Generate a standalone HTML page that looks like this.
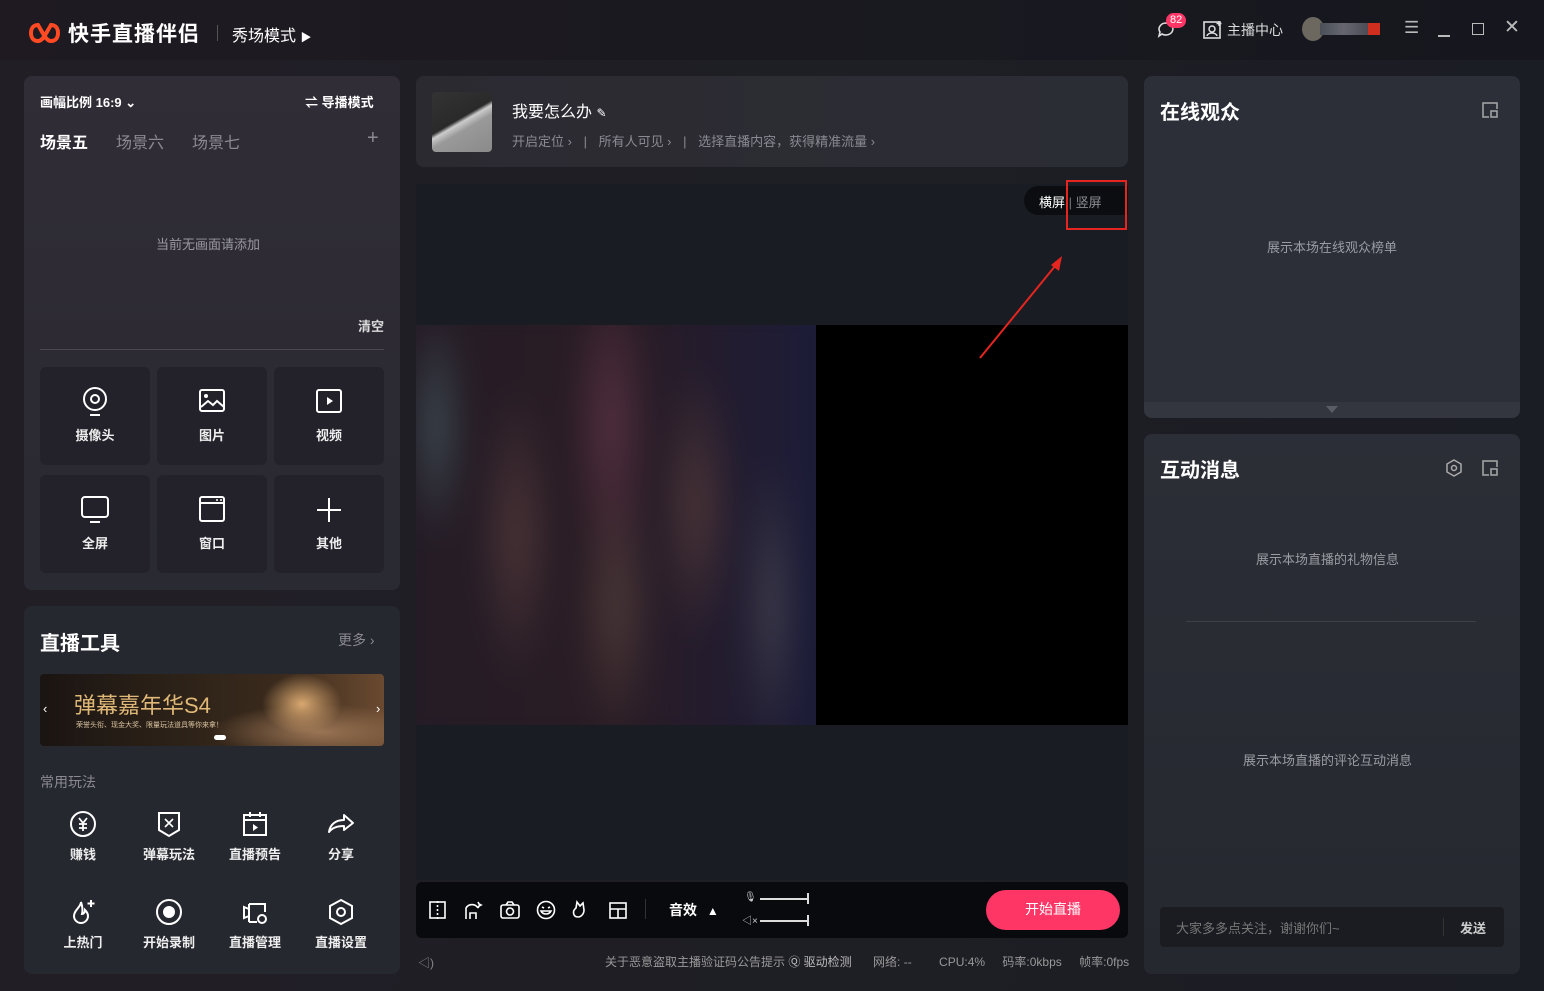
<!DOCTYPE html>
<html><head><meta charset="utf-8"><style>
*{margin:0;padding:0;box-sizing:border-box}
body{width:1544px;height:991px;overflow:hidden;font-family:"Liberation Sans","Noto Sans CJK SC",sans-serif;color:#fff;background:linear-gradient(90deg,#221e26 0%,#1f1e25 40%,#1b1d24 100%);position:relative;font-size:13px}
.abs{position:absolute}
.top{left:0;top:0;width:1544px;height:60px;background:linear-gradient(90deg,#1f1a21,#191920 60%,#16171e)}
.panel{position:absolute;border-radius:8px}
.tile{position:absolute;width:110px;height:98px;background:#232129;border-radius:6px;text-align:center;font-size:13px;color:#eee;font-weight:bold}
.tile svg{display:block;margin:20px auto 8px}
.tool{position:absolute;width:86px;text-align:center;font-size:13px;color:#eee;font-weight:bold}
.tool svg{display:block;margin:0 auto 6px}
.g{color:#8b8a92}
</style></head><body>
<div class="abs top"></div>
<svg class="abs" style="left:29px;top:22px" width="31" height="22" viewBox="0 0 31 22"><path d="M9 3C4 3 2 7 2 11s2 8 7 8c5 0 8-8 13-16 5 0 7 4 7 8s-2 8-7 8c-5 0-8-8-13-16z" fill="none" stroke="#ff4a24" stroke-width="4"/></svg>
<div class="abs" style="left:68px;top:18px;font-size:21px;font-weight:bold;letter-spacing:1px">快手直播伴侣</div>
<div class="abs" style="left:217px;top:25px;width:1px;height:16px;background:#555"></div>
<div class="abs" style="left:232px;top:22px;font-size:16px">秀场模式 <span style="font-size:11px">▶</span></div>
<svg class="abs" style="left:1156px;top:20px" width="20" height="20" viewBox="0 0 20 20"><path d="M10 3a7 6 0 1 1-4 11l-3 2 1-4A7 6 0 0 1 10 3z" fill="none" stroke="#ddd" stroke-width="1.6"/></svg>
<div class="abs" style="left:1166px;top:13px;background:#fe3666;border-radius:8px;font-size:11px;padding:0 4px;height:15px;line-height:15px">82</div>
<svg class="abs" style="left:1203px;top:20px" width="20" height="20" viewBox="0 0 20 20"><rect x="1" y="2" width="16" height="16" fill="none" stroke="#ddd" stroke-width="1.6"/><circle cx="9" cy="9" r="3" fill="none" stroke="#ddd" stroke-width="1.5"/><path d="M4 16c1-4 9-4 10 0M16 1v5M13.5 3.5h5" stroke="#ddd" stroke-width="1.5" fill="none"/></svg>
<div class="abs" style="left:1227px;top:20px;font-size:14px;color:#ddd">主播中心</div>
<div class="abs" style="left:1302px;top:17px;width:22px;height:24px;border-radius:50%;background:#6c6860"></div>
<div class="abs" style="left:1320px;top:23px;width:48px;height:12px;background:linear-gradient(90deg,#4a5058,#666670,#4b4c55)"></div>
<div class="abs" style="left:1368px;top:23px;width:12px;height:12px;background:#d02e1e"></div>
<div class="abs" style="left:1404px;top:18px;color:#bbb;font-size:17px">☰</div>
<div class="abs" style="left:1438px;top:35px;width:12px;height:1.5px;background:#bbb"></div>
<div class="abs" style="left:1472px;top:23px;width:12px;height:12px;border:1.5px solid #bbb"></div>
<div class="abs" style="left:1504px;top:16px;color:#bbb;font-size:19px">✕</div>

<div class="panel" style="left:24px;top:76px;width:376px;height:514px;background:linear-gradient(180deg,#312d37,#2c2a33 60%,#2a2a32)"></div>
<div class="abs" style="left:40px;top:92px;font-size:13px;font-weight:bold">画幅比例 16:9 ⌄</div>
<div class="abs" style="left:305px;top:92px;font-size:13px;font-weight:bold">⇌ 导播模式</div>
<div class="abs" style="left:40px;top:129px;font-size:16px;font-weight:bold">场景五</div>
<div class="abs g" style="left:116px;top:129px;font-size:16px">场景六</div>
<div class="abs g" style="left:192px;top:129px;font-size:16px">场景七</div>
<div class="abs g" style="left:367px;top:127px;font-size:20px">+</div>
<div class="abs" style="left:156px;top:234px;color:#9a98a0">当前无画面请添加</div>
<div class="abs" style="left:358px;top:316px;color:#ddd;font-weight:bold">清空</div>
<div class="abs" style="left:40px;top:349px;width:344px;height:1px;background:#4a4750"></div>
<div class="tile" style="left:40px;top:367px"><svg width="28" height="30" viewBox="0 0 28 30"><circle cx="14" cy="12" r="11" fill="none" stroke="#fff" stroke-width="2"/><circle cx="14" cy="12" r="4" fill="none" stroke="#fff" stroke-width="2"/><path d="M9 28h10" stroke="#fff" stroke-width="2"/></svg>摄像头</div>
<div class="tile" style="left:157px;top:367px"><svg width="28" height="30" viewBox="0 0 28 30"><rect x="2" y="3" width="24" height="21" rx="2" fill="none" stroke="#fff" stroke-width="2"/><circle cx="8" cy="9" r="2" fill="#fff"/><path d="M3 20l7-6 5 4 4-4 7 6" fill="none" stroke="#fff" stroke-width="2"/></svg>图片</div>
<div class="tile" style="left:274px;top:367px"><svg width="28" height="30" viewBox="0 0 28 30"><rect x="2" y="3" width="24" height="22" rx="2" fill="none" stroke="#fff" stroke-width="2"/><path d="M12 10v8l6-4z" fill="#fff"/></svg>视频</div>
<div class="tile" style="left:40px;top:475px"><svg width="28" height="30" viewBox="0 0 28 30"><rect x="1" y="2" width="26" height="20" rx="3" fill="none" stroke="#fff" stroke-width="2"/><path d="M9 27h10" stroke="#fff" stroke-width="2"/></svg>全屏</div>
<div class="tile" style="left:157px;top:475px"><svg width="28" height="30" viewBox="0 0 28 30"><rect x="2" y="2" width="24" height="24" rx="2" fill="none" stroke="#fff" stroke-width="2"/><path d="M2 8h24" stroke="#fff" stroke-width="2"/><path d="M18 5h2M22 5h2" stroke="#fff" stroke-width="1.5"/></svg>窗口</div>
<div class="tile" style="left:274px;top:475px"><svg width="28" height="30" viewBox="0 0 28 30"><path d="M14 3v24M2 15h24" stroke="#fff" stroke-width="2"/></svg>其他</div>

<div class="panel" style="left:24px;top:606px;width:376px;height:368px;background:#26282f"></div>
<div class="abs" style="left:40px;top:627px;font-size:20px;font-weight:bold">直播工具</div>
<div class="abs g" style="left:338px;top:630px;font-size:14px">更多 ›</div>
<div class="abs" style="left:40px;top:674px;width:344px;height:72px;border-radius:4px;background:radial-gradient(ellipse 40px 30px at 262px 30px,#d9a870,transparent),radial-gradient(ellipse 110px 28px at 280px 58px,#9a7454,transparent),linear-gradient(90deg,#1a1412,#2d2218 40%,#3a2a1c 70%,#6a4a30)"></div>
<div class="abs" style="left:74px;top:688px;font-size:22px;color:#e0b878">弹幕嘉年华S4</div>
<div class="abs" style="left:76px;top:720px;font-size:7px;color:#d9c3a0">荣誉头衔、现金大奖、限量玩法道具等你来拿！</div>
<div class="abs" style="left:43px;top:701px;color:#fff;font-size:13px">‹</div>
<div class="abs" style="left:376px;top:701px;color:#fff;font-size:13px">›</div>
<div class="abs" style="left:214px;top:735px;width:12px;height:5px;border-radius:3px;background:#fff"></div>
<div class="abs g" style="left:40px;top:772px;font-size:14px">常用玩法</div>
<div class="tool" style="left:40px;top:810px"><svg width="28" height="28" viewBox="0 0 28 28"><circle cx="14" cy="14" r="12" fill="none" stroke="#fff" stroke-width="2"/><path d="M10 8l4 5 4-5M14 13v8M10 14h8M10 18h8" stroke="#fff" stroke-width="1.8" fill="none"/></svg>赚钱</div>
<div class="tool" style="left:126px;top:810px"><svg width="28" height="28" viewBox="0 0 28 28"><path d="M4 3h20v17l-10 6-10-6z" fill="none" stroke="#fff" stroke-width="2"/><path d="M10 9l8 8M18 9l-8 8" stroke="#fff" stroke-width="1.6"/></svg>弹幕玩法</div>
<div class="tool" style="left:212px;top:810px"><svg width="28" height="28" viewBox="0 0 28 28"><rect x="3" y="5" width="22" height="20" fill="none" stroke="#fff" stroke-width="2"/><path d="M3 10h22M9 2v5M19 2v5" stroke="#fff" stroke-width="2"/><path d="M12 14v7l5-3.5z" fill="#fff"/></svg>直播预告</div>
<div class="tool" style="left:298px;top:810px"><svg width="30" height="28" viewBox="0 0 30 28"><path d="M18 5l9 8-9 7v-4C11 16 6 18 3 22c1-7 6-12 15-12z" fill="none" stroke="#fff" stroke-width="2" stroke-linejoin="round"/></svg>分享</div>
<div class="tool" style="left:40px;top:898px"><svg width="28" height="28" viewBox="0 0 28 28"><path d="M12 4c0 5-7 8-7 14a7 7 0 0 0 14 0c0-3-2-5-3-6 0 3-2 4-3 4 1-4 0-9-1-12z" fill="none" stroke="#fff" stroke-width="2"/><path d="M22 2v7M18.5 5.5h7" stroke="#fff" stroke-width="2"/></svg>上热门</div>
<div class="tool" style="left:126px;top:898px"><svg width="28" height="28" viewBox="0 0 28 28"><circle cx="14" cy="14" r="12" fill="none" stroke="#fff" stroke-width="2"/><circle cx="14" cy="14" r="6" fill="#fff"/></svg>开始录制</div>
<div class="tool" style="left:212px;top:898px"><svg width="28" height="28" viewBox="0 0 28 28"><path d="M8 6h16v8M8 24V6M3 9l5 2v7l-5 2zM8 24h8" fill="none" stroke="#fff" stroke-width="2"/><circle cx="21" cy="21" r="4" fill="none" stroke="#fff" stroke-width="2"/></svg>直播管理</div>
<div class="tool" style="left:298px;top:898px"><svg width="28" height="28" viewBox="0 0 28 28"><path d="M14 2l11 6v12l-11 6-11-6V8z" fill="none" stroke="#fff" stroke-width="2"/><circle cx="14" cy="14" r="4" fill="none" stroke="#fff" stroke-width="2"/></svg>直播设置</div>

<div class="panel" style="left:416px;top:76px;width:712px;height:91px;background:linear-gradient(90deg,#2c2a31,#2b2d35)"></div>
<div class="abs" style="left:432px;top:92px;width:60px;height:60px;border-radius:4px;background:linear-gradient(150deg,#333 0%,#2a2a2a 45%,#ccc 50%,#999 60%,#8a8a8a 100%)"></div>
<div class="abs" style="left:512px;top:98px;font-size:16px">我要怎么办 <span style="font-size:12px">✎</span></div>
<div class="abs g" style="left:512px;top:131px">开启定位 ›  <span style="margin:0 8px">|</span> 所有人可见 › <span style="margin:0 8px">|</span> 选择直播内容，获得精准流量 ›</div>
<div class="abs" style="left:416px;top:184px;width:712px;height:696px;background:#1a1c23"></div>
<div class="abs" style="left:416px;top:325px;width:400px;height:400px;overflow:hidden;background:#241c26">
<div style="position:absolute;left:-20px;top:-20px;width:440px;height:440px;filter:blur(14px);background:radial-gradient(ellipse 30px 120px at 40px 120px,#3c4a52,transparent),radial-gradient(ellipse 40px 150px at 120px 230px,#4a3437,transparent),radial-gradient(ellipse 40px 160px at 215px 120px,#553040,transparent),radial-gradient(ellipse 40px 140px at 220px 300px,#4a3838,transparent),radial-gradient(ellipse 40px 140px at 300px 200px,#4a3436,transparent),radial-gradient(ellipse 30px 150px at 375px 300px,#3e3c4a,transparent),linear-gradient(90deg,#241c26,#2a1c24 50%,#1b1c3a)"></div></div>
<div class="abs" style="left:816px;top:325px;width:312px;height:400px;background:#000"></div>
<div class="abs" style="left:1024px;top:186px;width:104px;height:29px;border-radius:15px 0 0 15px;background:#0c0d11"></div>
<div class="abs" style="left:1039px;top:192px;color:#fff">横屏 <span style="color:#777">|</span> <span class="g">竖屏</span></div>
<div class="abs" style="left:1066px;top:180px;width:61px;height:50px;border:2px solid #e5251f"></div>
<svg class="abs" style="left:975px;top:250px" width="92" height="112"><path d="M5 108L85 10" stroke="#e5251f" stroke-width="2"/><path d="M87 6l-3 15-8-6z" fill="#e5251f"/></svg>
<div class="panel" style="left:416px;top:882px;width:712px;height:56px;background:#090a0e;border-radius:6px"></div>
<svg class="abs" style="left:428px;top:899px" width="200" height="22" viewBox="0 0 200 22" fill="none" stroke="#fff" stroke-width="1.6"><rect x="2" y="3" width="15" height="16"/><path d="M9.5 2v18" stroke-dasharray="2 2"/><path d="M38 20V9a7 7 0 0 1 12 0M42 20v-6h6v6M50 3l1 2 2 1-2 1-1 2" /><rect x="73" y="6" width="18" height="13" rx="2"/><circle cx="82" cy="12.5" r="3.5"/><path d="M78 6l2-3h4l2 3"/><circle cx="118" cy="11" r="8.5"/><path d="M113 12c2 4 8 4 10 0zM114 8l2 1M122 8l-2 1"/><path d="M150 18c-5 0-6-6-2-9l1-6 3 4 3-3 1 7c0 4-3 7-6 7z"/><rect x="182" y="4" width="16" height="15"/><path d="M182 10h16M190 10v9"/></svg>
<div class="abs" style="left:645px;top:899px;width:1px;height:20px;background:#333"></div>
<div class="abs" style="left:669px;top:900px;font-size:14px;font-weight:bold">音效 <span style="font-size:12px;margin-left:6px">▲</span></div>
<div class="abs" style="left:744px;top:892px;font-size:10px;color:#ccc">🎙</div>
<div class="abs" style="left:760px;top:898px;width:48px;height:2px;background:#ddd"></div>
<div class="abs" style="left:807px;top:893px;width:2px;height:11px;background:#ddd"></div>
<div class="abs" style="left:742px;top:912px;font-size:10px;color:#ccc">◁×</div>
<div class="abs" style="left:760px;top:920px;width:48px;height:2px;background:#ddd"></div>
<div class="abs" style="left:807px;top:915px;width:2px;height:11px;background:#ddd"></div>
<div class="abs" style="left:986px;top:890px;width:134px;height:40px;border-radius:20px;background:#fe3666;text-align:center;line-height:39px;font-size:14px">开始直播</div>
<div class="abs" style="left:418px;top:954px;color:#888;font-size:12px">◁)</div>
<div class="abs" style="left:605px;top:953px;color:#999;font-size:12px;white-space:nowrap">关于恶意盗取主播验证码公告提示 <span style="color:#bbb">Ⓠ 驱动检测</span> <span style="margin-left:18px">网络: --</span> <span style="margin-left:24px">CPU:4%</span> <span style="margin-left:14px">码率:0kbps</span> <span style="margin-left:14px">帧率:0fps</span></div>

<div class="panel" style="left:1144px;top:76px;width:376px;height:342px;background:#2c2f38"></div>
<div class="abs" style="left:1144px;top:402px;width:376px;height:16px;background:#34363f;border-radius:0 0 8px 8px"></div>
<div class="abs" style="left:1326px;top:406px;width:0;height:0;border-left:6px solid transparent;border-right:6px solid transparent;border-top:7px solid #5a5c66"></div>
<div class="abs" style="left:1160px;top:96px;font-size:20px;font-weight:bold">在线观众</div>
<svg class="abs" style="left:1481px;top:101px" width="18" height="18" fill="none" stroke="#aaa" stroke-width="1.5"><path d="M16 8V2H2v14h6"/><rect x="10" y="10" width="6" height="6"/></svg>
<div class="abs" style="left:1267px;top:237px;color:#9a9ba3">展示本场在线观众榜单</div>
<div class="panel" style="left:1144px;top:434px;width:376px;height:540px;background:linear-gradient(180deg,#2c2e37,#262830)"></div>
<div class="abs" style="left:1160px;top:454px;font-size:20px;font-weight:bold">互动消息</div>
<svg class="abs" style="left:1445px;top:459px" width="18" height="18" fill="none" stroke="#aaa" stroke-width="1.5"><path d="M9 1l7 4v8l-7 4-7-4V5z"/><circle cx="9" cy="9" r="2.5"/></svg>
<svg class="abs" style="left:1481px;top:459px" width="18" height="18" fill="none" stroke="#aaa" stroke-width="1.5"><path d="M16 8V2H2v14h6"/><rect x="10" y="10" width="6" height="6"/></svg>
<div class="abs" style="left:1256px;top:549px;color:#9a9ba3">展示本场直播的礼物信息</div>
<div class="abs" style="left:1186px;top:621px;width:290px;height:1px;background:#3e4049"></div>
<div class="abs" style="left:1243px;top:750px;color:#9a9ba3">展示本场直播的评论互动消息</div>
<div class="abs" style="left:1160px;top:907px;width:344px;height:40px;border-radius:4px;background:#1b1c21"></div>
<div class="abs" style="left:1176px;top:918px;color:#777">大家多多点关注，谢谢你们~</div>
<div class="abs" style="left:1443px;top:918px;width:1px;height:18px;background:#333"></div>
<div class="abs" style="left:1460px;top:918px;color:#ccc;font-weight:bold">发送</div>
</body></html>
